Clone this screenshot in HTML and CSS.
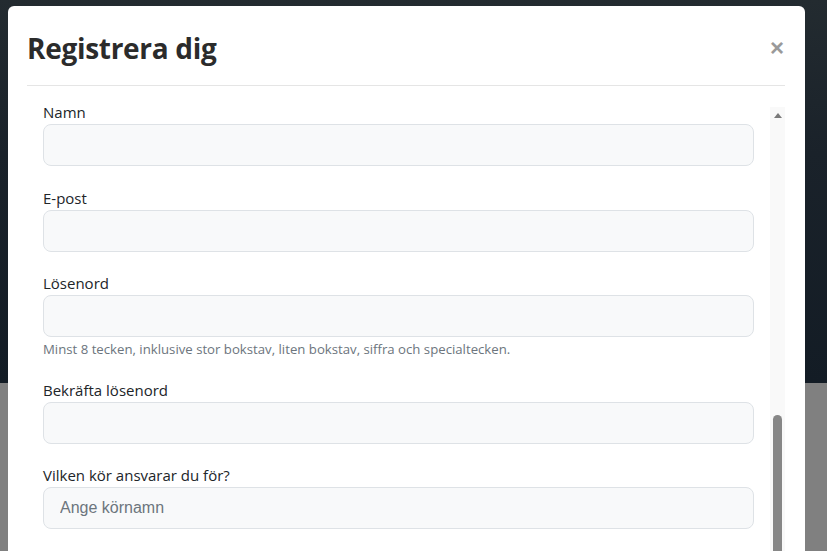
FILE: index.html
```html
<!DOCTYPE html>
<html lang="sv">
<head>
<meta charset="UTF-8">
<meta name="viewport" content="width=device-width, initial-scale=1.0">
<title>Registrera dig</title>
<link rel="stylesheet" href="styles.css">
</head>
<body>
<div class="page">
  <div class="hero"></div>
  <div class="page-rest"></div>
</div>

<div class="modal">
  <div class="modal-header">
    <h2 class="modal-title">Registrera dig</h2>
    <button class="close" type="button">&times;</button>
  </div>
  <div class="modal-body">
    <form class="form">
      <div class="form-group">
        <label for="name">Namn</label>
        <input class="form-control" id="name" type="text">
      </div>
      <div class="form-group">
        <label for="email">E-post</label>
        <input class="form-control" id="email" type="email">
      </div>
      <div class="form-group">
        <label for="password">Lösenord</label>
        <input class="form-control" id="password" type="password">
        <div class="form-text">Minst 8 tecken, inklusive stor bokstav, liten bokstav, siffra och specialtecken.</div>
      </div>
      <div class="form-group">
        <label for="password2">Bekräfta lösenord</label>
        <input class="form-control" id="password2" type="password">
      </div>
      <div class="form-group">
        <label for="choir">Vilken kör ansvarar du för?</label>
        <input class="form-control" id="choir" type="text" placeholder="Ange körnamn">
      </div>
    </form>
    <div class="scrollbar">
      <div class="sb-arrow"></div>
      <div class="sb-thumb"></div>
    </div>
  </div>
</div>
</body>
</html>
```

FILE: styles.css
```css
html, body {
  margin: 0;
  height: 100%;
  overflow: hidden;
}
body {
  font-family: "Open Sans", "Noto Sans", sans-serif;
  color: #212529;
  background-color: #808080;
}
.hero {
  height: 383px;
  background: linear-gradient(#232b30, #1a222a 40%, #131c25);
}
.modal {
  position: absolute;
  top: 6px;
  left: 8px;
  width: 797px;
  height: 560px;
  background-color: white;
  border-radius: 6px;
  overflow: hidden;
}
.modal-header {
  display: flex;
  align-items: center;
  justify-content: space-between;
  margin: 0 20px 0 19px;
  height: 79px;
  border-bottom: 1px solid #e5e5e5;
}
.modal-title {
  margin: 0;
  font-size: 28px;
  font-weight: 700;
  line-height: 1.2;
  color: #2b2b2b;
  letter-spacing: -0.3px;
  padding-top: 6px;
}
.close {
  border: none;
  background: none;
  padding: 4px 0 0;
  margin-right: 1px;
  font-family: "Liberation Sans", Arial, sans-serif;
  font-size: 24px;
  font-weight: 700;
  line-height: 1;
  color: #9a9a9a;
  cursor: pointer;
}
.modal-body {
  display: flex;
  margin: 0 20px 0 19px;
  padding-left: 16px;
  gap: 16px;
}
.form {
  flex: 1;
  padding-top: 14px;
}
.form-group {
  margin-bottom: 19.5px;
}
.form-group label {
  display: block;
  font-size: 15px;
  line-height: 24px;
}
.form-control {
  display: block;
  box-sizing: border-box;
  width: 100%;
  height: 42px;
  padding: 8px 16px;
  font-family: "Liberation Sans", Arial, sans-serif;
  font-size: 16px;
  color: #212529;
  background-color: #f8f9fa;
  border: 1px solid #dee2e6;
  border-radius: 8px;
}
.form-control::placeholder {
  color: #6c757d;
}
.form-text {
  margin-top: 3px;
  font-size: 13.2px;
  line-height: 18px;
  color: #6c757d;
}
.scrollbar {
  width: 15px;
  margin-top: 21px;
  background-color: #f9f9f9;
  display: flex;
  flex-direction: column;
  align-items: center;
}
.sb-arrow {
  width: 0;
  height: 0;
  margin-top: 6px;
  border-left: 4px solid transparent;
  border-right: 4px solid transparent;
  border-bottom: 5px solid #7a7a7a;
}
.sb-thumb {
  width: 9px;
  height: 200px;
  margin-top: 297px;
  background-color: #878787;
  border-radius: 5px 5px 0 0;
}
```
